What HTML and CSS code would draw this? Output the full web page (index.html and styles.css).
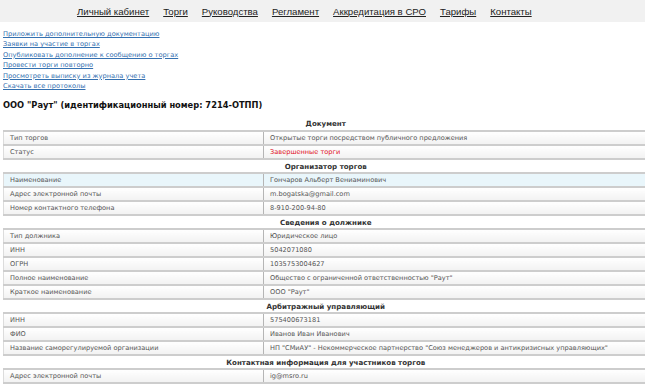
FILE: index.html
```html
<!DOCTYPE html>
<html lang="ru">
<head>
    <meta charset="UTF-8">
    <title>Торги - ООО "Раут"</title>
    <link rel="stylesheet" href="styles.css">
</head>
<body>
    <div class="topbar">
        <a href="#">Личный кабинет</a>
        <a href="#">Торги</a>
        <a href="#">Руководства</a>
        <a href="#">Регламент</a>
        <a href="#">Аккредитация в СРО</a>
        <a href="#">Тарифы</a>
        <a href="#">Контакты</a>
    </div>

    <ul class="actions">
        <li><a href="#">Приложить дополнительную документацию</a></li>
        <li><a href="#">Заявки на участие в торгах</a></li>
        <li><a href="#">Опубликовать дополнение к сообщению о торгах</a></li>
        <li><a href="#">Провести торги повторно</a></li>
        <li><a href="#">Просмотреть выписку из журнала учета</a></li>
        <li><a href="#">Скачать все протоколы</a></li>
    </ul>

    <h1>ООО "Раут" (идентификационный номер: 7214-ОТПП)</h1>

    <table class="info">
        <tr class="section"><th colspan="2">Документ</th></tr>
        <tr><td>Тип торгов</td><td>Открытые торги посредством публичного предложения</td></tr>
        <tr><td>Статус</td><td class="red">Завершенные торги</td></tr>

        <tr class="section"><th colspan="2">Организатор торгов</th></tr>
        <tr class="hl"><td>Наименование</td><td>Гончаров Альберт Вениаминович</td></tr>
        <tr><td>Адрес электронной почты</td><td>m.bogatska@gmail.com</td></tr>
        <tr><td>Номер контактного телефона</td><td>8-910-200-94-80</td></tr>

        <tr class="section"><th colspan="2">Сведения о должнике</th></tr>
        <tr><td>Тип должника</td><td>Юридическое лицо</td></tr>
        <tr><td>ИНН</td><td>5042071080</td></tr>
        <tr><td>ОГРН</td><td>1035753004627</td></tr>
        <tr><td>Полное наименование</td><td>Общество с ограниченной ответственностью "Раут"</td></tr>
        <tr><td>Краткое наименование</td><td>ООО "Раут"</td></tr>

        <tr class="section"><th colspan="2">Арбитражный управляющий</th></tr>
        <tr><td>ИНН</td><td>575400673181</td></tr>
        <tr><td>ФИО</td><td>Иванов Иван Иванович</td></tr>
        <tr><td>Название саморегулируемой организации</td><td>НП "СМиАУ" - Некоммерческое партнерство "Союз менеджеров и антикризисных управляющих"</td></tr>

        <tr class="section"><th colspan="2">Контактная информация для участников торгов</th></tr>
        <tr><td>Адрес электронной почты</td><td>ig@msro.ru</td></tr>
    </table>
</body>
</html>
```

FILE: styles.css
```css
* {
    margin: 0;
    padding: 0;
    box-sizing: border-box;
}

body {
    font-family: "DejaVu Sans", Verdana, sans-serif;
    background: white;
    color: #555;
}

.topbar {
    background: #f1f1f1;
    height: 22px;
    display: flex;
    align-items: center;
    gap: 14px;
    padding-left: 77px;
}

.topbar a {
    color: #222;
    font-family: "Liberation Sans", Arial, sans-serif;
    font-size: 9.6px;
    text-decoration: underline;
}

.actions {
    list-style: none;
    margin: 7px 0 0 3px;
}

.actions li {
    font-size: 6.65px;
    line-height: 10.4px;
}

.actions a {
    color: #3470b0;
    text-decoration: underline;
}

h1 {
    font-size: 8.3px;
    color: #111;
    margin: 9px 0 0 3px;
    height: 17px;
}

.info {
    border-collapse: collapse;
    width: 645px;
    margin-left: 3px;
    font-size: 6.6px;
}

.info tr {
    height: 14px;
}

.info th,
.info td {
    height: 14px;
    border-bottom: 2px solid #cdcdcd;
    padding: 0 6px;
    white-space: nowrap;
}

.info td {
    background: linear-gradient(#ffffff, #f2f2f2);
    text-align: left;
}

.info td:first-child {
    width: 260px;
    border-left: 1px solid #dcdcdc;
    border-right: 1px solid #b5b5b5;
}

.info th {
    background: white;
    color: #333;
    font-weight: bold;
    font-size: 7.1px;
    text-align: center;
}

.info tr.hl td {
    background: #e9f6fb;
}

.info .red {
    color: #e0101e;
}
```
